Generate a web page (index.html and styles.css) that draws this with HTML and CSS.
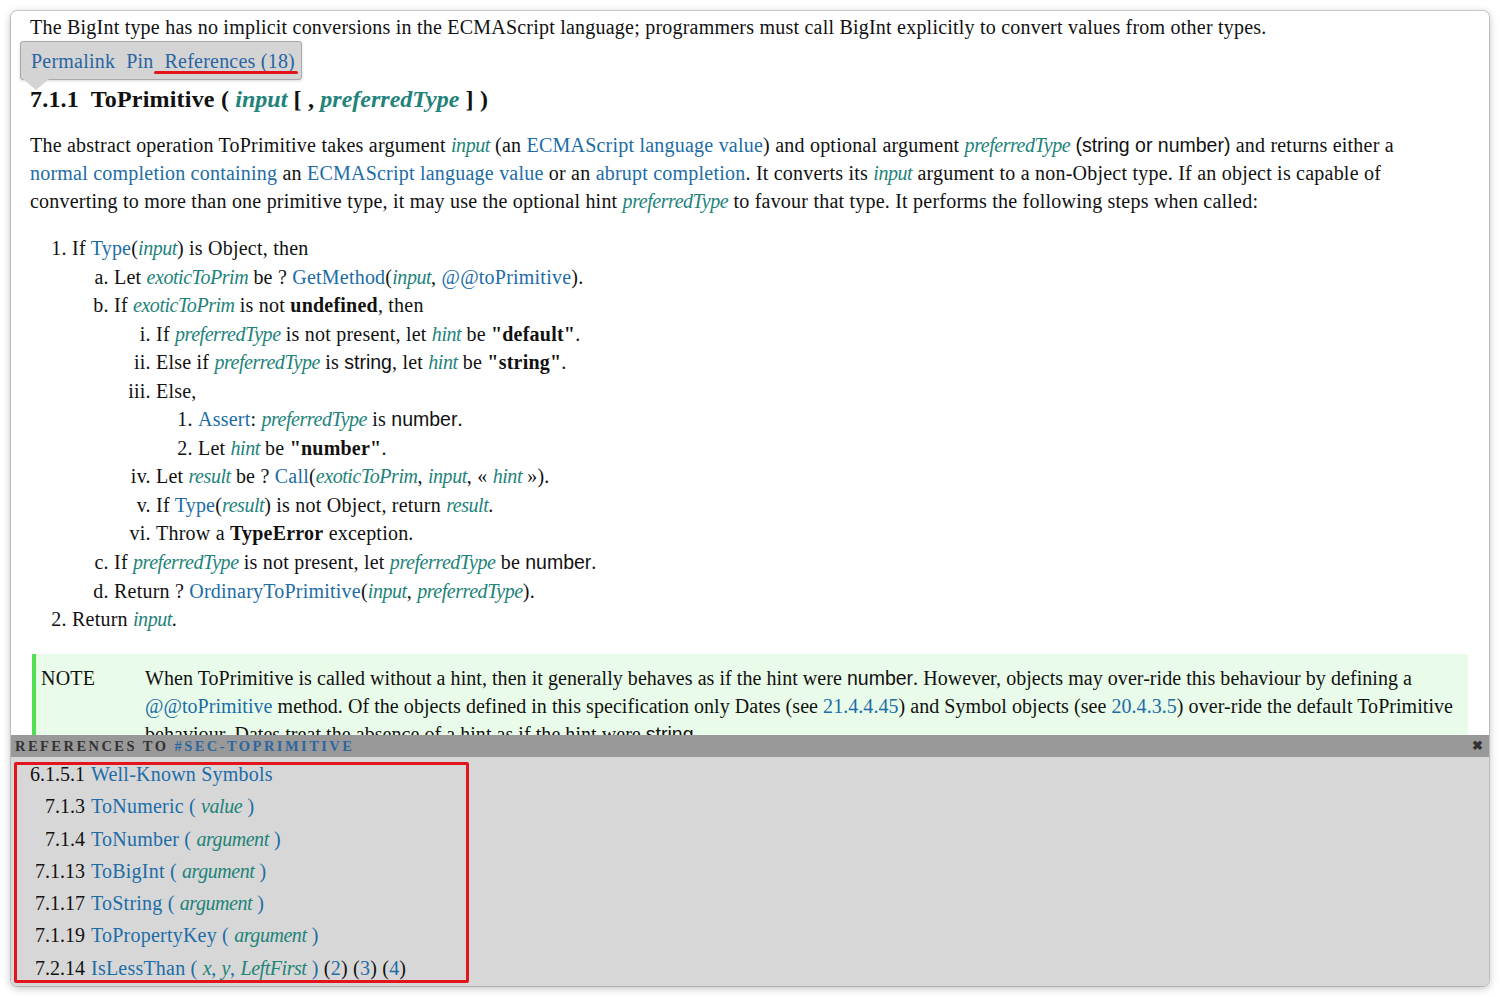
FILE: index.html
```
<!DOCTYPE html>
<html>
<head>
<meta charset="utf-8">
<link rel="stylesheet" href="styles.css">
</head>
<body>
<div class="window">
  <div class="content">
    <p class="top">The BigInt type has no implicit conversions in the ECMAScript language; programmers must call BigInt explicitly to convert values from other types.</p>

    <div class="toolbox">
      <a>Permalink</a><a>Pin</a><a class="mark">References (18)</a>
    </div>

    <h1><span class="secnum">7.1.1</span> ToPrimitive ( <var>input</var> [ , <var>preferredType</var> ] )</h1>

    <p class="para">The abstract operation ToPrimitive takes argument <var>input</var> (an <a>ECMAScript language value</a>) and optional argument <var>preferredType</var> <span class="sans">(string or number)</span> and returns either a <a>normal completion containing</a> an <a>ECMAScript language value</a> or an <a>abrupt completion</a>. It converts its <var>input</var> argument to a non-Object type. If an object is capable of converting to more than one primitive type, it may use the optional hint <var>preferredType</var> to favour that type. It performs the following steps when called:</p>

    <ol class="steps">
      <li>If <a>Type</a>(<var>input</var>) is Object, then
        <ol class="alpha">
          <li>Let <var>exoticToPrim</var> be ? <a>GetMethod</a>(<var>input</var>, <a>@@toPrimitive</a>).</li>
          <li>If <var>exoticToPrim</var> is not <b>undefined</b>, then
            <ol class="roman">
              <li>If <var>preferredType</var> is not present, let <var>hint</var> be <b>"default"</b>.</li>
              <li>Else if <var>preferredType</var> is <span class="sans">string</span>, let <var>hint</var> be <b>"string"</b>.</li>
              <li>Else,
                <ol class="dec">
                  <li><a>Assert</a>: <var>preferredType</var> is <span class="sans">number</span>.</li>
                  <li>Let <var>hint</var> be <b>"number"</b>.</li>
                </ol>
              </li>
              <li>Let <var>result</var> be ? <a>Call</a>(<var>exoticToPrim</var>, <var>input</var>, « <var>hint</var> »).</li>
              <li>If <a>Type</a>(<var>result</var>) is not Object, return <var>result</var>.</li>
              <li>Throw a <b>TypeError</b> exception.</li>
            </ol>
          </li>
          <li>If <var>preferredType</var> is not present, let <var>preferredType</var> be <span class="sans">number</span>.</li>
          <li>Return ? <a>OrdinaryToPrimitive</a>(<var>input</var>, <var>preferredType</var>).</li>
        </ol>
      </li>
      <li>Return <var>input</var>.</li>
    </ol>

    <div class="note">
      <span class="note-label">NOTE</span>
      <p class="note-body">When ToPrimitive is called without a hint, then it generally behaves as if the hint were <span class="sans">number</span>. However, objects may over-ride this behaviour by defining a <a>@@toPrimitive</a> method. Of the objects defined in this specification only Dates (see <a>21.4.4.45</a>) and Symbol objects (see <a>20.4.3.5</a>) over-ride the default ToPrimitive behaviour. Dates treat the absence of a hint as if the hint were <span class="sans">string</span>.</p>
    </div>
  </div>

  <div class="refpane">
    <div class="refhead"><span>References to <a>#sec-toprimitive</a></span><span class="close">✖</span></div>
    <div class="reflist">
      <table>
        <tr><td class="num">6.1.5.1</td><td><a>Well-Known Symbols</a></td></tr>
        <tr><td class="num">7.1.3</td><td><a>ToNumeric ( <var>value</var> )</a></td></tr>
        <tr><td class="num">7.1.4</td><td><a>ToNumber ( <var>argument</var> )</a></td></tr>
        <tr><td class="num">7.1.13</td><td><a>ToBigInt ( <var>argument</var> )</a></td></tr>
        <tr><td class="num">7.1.17</td><td><a>ToString ( <var>argument</var> )</a></td></tr>
        <tr><td class="num">7.1.19</td><td><a>ToPropertyKey ( <var>argument</var> )</a></td></tr>
        <tr><td class="num">7.2.14</td><td><a>IsLessThan ( <var>x</var>, <var>y</var>, <var>LeftFirst</var> )</a> (<a>2</a>) (<a>3</a>) (<a>4</a>)</td></tr>
      </table>
      <div class="highlight"></div>
    </div>
  </div>
</div>
</body>
</html>
```

FILE: styles.css
```
* { box-sizing: border-box; }
html, body { margin: 0; padding: 0; background: #fff; }
body {
  font-family: "Liberation Serif", "Times New Roman", serif;
  font-size: 20px;
  letter-spacing: 0.22px;
  color: #111;
}
a { color: #206ca7; text-decoration: none; }
var { color: #218379; font-style: italic; letter-spacing: -0.45px; }
b { font-weight: bold; color: #111; }
.sans {
  font-family: "Liberation Sans", Arial, sans-serif;
  font-size: 19.5px;
  letter-spacing: 0;
  line-height: 1;
}

.window {
  margin: 11px;
  width: 1478px;
  height: 975px;
  border-radius: 6px;
  background: #fff;
  box-shadow: 0 0 0 1px rgba(0,0,0,0.16), 0 2px 9px rgba(0,0,0,0.28);
  overflow: hidden;
  display: flex;
  flex-direction: column;
}

.content {
  flex: 1;
  position: relative;
  overflow: hidden;
  padding: 2px 21px 0 19px;
}

p { margin: 0; line-height: 28px; }
.top { margin-bottom: 43px; }
.para { padding-right: 22px; }

.toolbox {
  position: absolute;
  left: 9px;
  top: 30px;
  width: 282px;
  height: 39px;
  background: #d4d4d4;
  border: 1px solid #a9a9a9;
  border-radius: 3px;
  display: flex;
  align-items: center;
  gap: 11px;
  padding: 0 0 0 10px;
  line-height: 24px;
  box-shadow: 0 1px 3px rgba(0,0,0,0.15);
}
.toolbox::after {
  content: "";
  position: absolute;
  left: 2px;
  bottom: -11px;
  border-left: 13px solid transparent;
  border-right: 13px solid transparent;
  border-top: 11px solid #d4d4d4;
}
.toolbox a { color: #2a64a2; }
.mark { position: relative; }
.mark::after {
  content: "";
  position: absolute;
  left: -11px;
  right: -3px;
  bottom: -1px;
  height: 3px;
  border-radius: 2px;
  background: #e3141c;
}

h1 {
  position: relative;
  margin: 0 0 17px;
  font-size: 24px;
  letter-spacing: 0.2px;
  line-height: 30px;
  font-weight: bold;
}
h1 var { letter-spacing: 0; }
.secnum { margin-right: 6px; }

ol { margin: 0; padding-left: 42px; line-height: 28.55px; }
ol.steps { margin: 19px 0 20px; padding-left: 42px; list-style-type: decimal; }
ol.alpha { list-style-type: lower-alpha; }
ol.roman { list-style-type: lower-roman; }
ol.dec { list-style-type: decimal; }

.note {
  margin-left: 2px;
  background: #e9fbe9;
  border-left: 4px solid #52e052;
  padding: 10px 0 10px 0;
  display: flex;
}
.note-label {
  flex: 0 0 109px;
  padding-left: 5px;
  line-height: 28px;
}
.note-body { flex: 1; letter-spacing: 0.05px; padding-right: 2px; }

.refpane {
  height: 251px;
  flex: 0 0 251px;
  display: flex;
  flex-direction: column;
  background: #d7d7d7;
}
.refhead {
  height: 22px;
  flex: 0 0 22px;
  background: #999;
  color: #333;
  font-weight: bold;
  font-size: 14.5px;
  letter-spacing: 2.45px;
  text-transform: uppercase;
  line-height: 22px;
  padding: 0 6px 0 4px;
  display: flex;
  justify-content: space-between;
}
.refhead a { color: #2d66a0; }
.close { font-size: 13px; letter-spacing: 0; color: #333; }

.reflist {
  flex: 1;
  position: relative;
  padding: 1px 0 0 15px;
}
table { border-collapse: collapse; }
td { padding: 0 4px; line-height: 32.3px; white-space: nowrap; }
td.num { text-align: right; color: #111; letter-spacing: 0; padding: 0 2px 0 4px; }
.highlight {
  position: absolute;
  left: 3px;
  top: 5px;
  width: 455px;
  height: 221px;
  border: 3px solid #e3141c;
  border-radius: 2px;
  pointer-events: none;
}
```
